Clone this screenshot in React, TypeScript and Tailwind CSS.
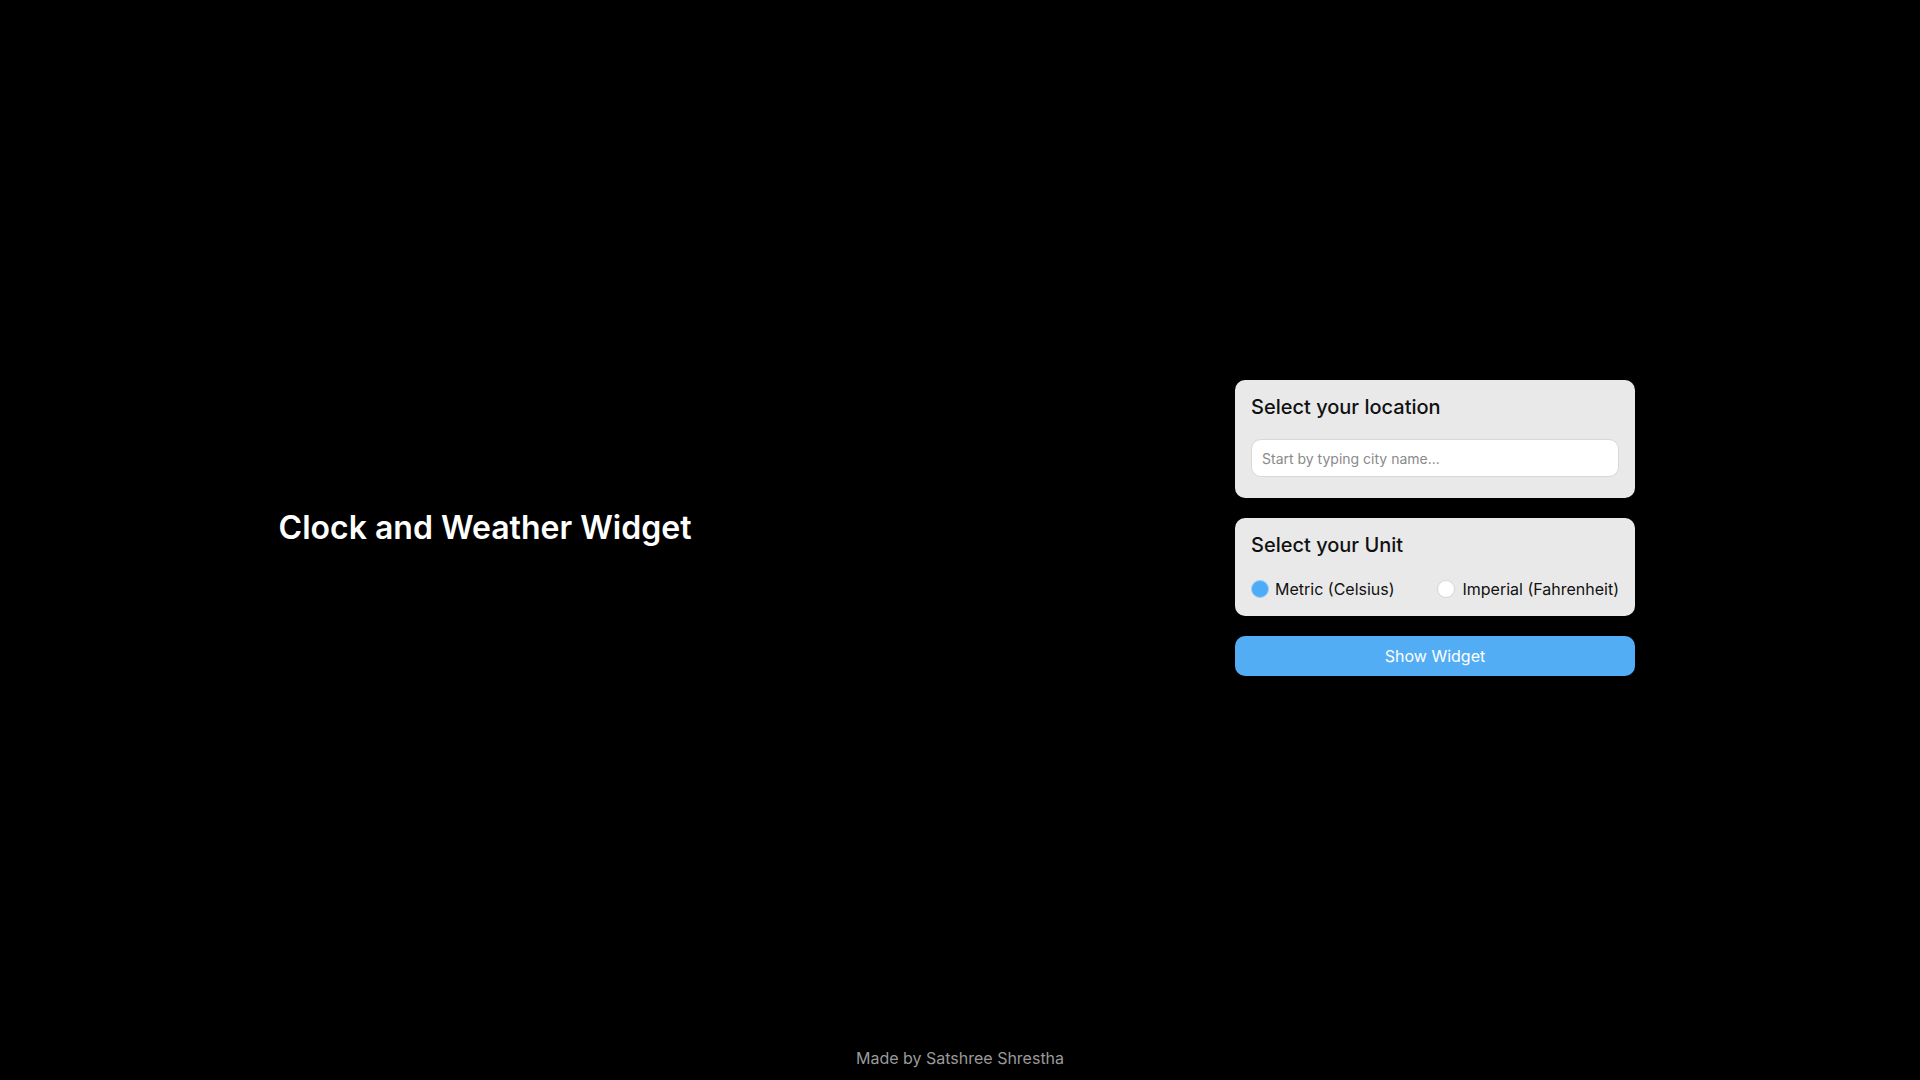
import React, { useState } from "react";

export default function App() {
  const [unit, setUnit] = useState<"metric" | "imperial">("metric");
  return (
    <div
      className="min-h-screen bg-black flex flex-col px-[10px]"
      style={{ fontFamily: "Inter, 'Noto Sans', sans-serif" }}
    >
      <main className="flex-1 grid grid-cols-2 items-center pt-[10px]">
        <div className="flex justify-center">
          <h1 className="text-[32px] leading-[38px] font-semibold text-white">
            Clock and Weather Widget
          </h1>
        </div>
        <div className="flex justify-center">
          <div className="w-[400px] flex flex-col gap-5">
            <div className="bg-[#e9e9e9] rounded-[10px] px-4 pt-[13px] pb-[21px]">
              <h2 className="text-[20px] leading-[28px] font-medium text-[#111]">
                Select your location
              </h2>
              <input
                type="text"
                placeholder="Start by typing city name..."
                className="mt-[18px] w-full h-[38px] bg-white border border-[#d8d8d8] rounded-[10px] px-[10px] text-[14px] text-[#222] placeholder:text-[#8a8a8a] outline-none"
              />
            </div>
            <div className="bg-[#e9e9e9] rounded-[10px] px-4 pt-[13px] pb-[15px]">
              <h2 className="text-[20px] leading-[28px] font-medium text-[#111]">
                Select your Unit
              </h2>
              <div className="mt-[18px] flex items-center justify-between h-6">
                <label
                  className="flex items-center gap-[6px] cursor-pointer text-[16px] text-[#111]"
                  onClick={() => setUnit("metric")}
                >
                  <span
                    className={
                      unit === "metric"
                        ? "w-[18px] h-[18px] rounded-full bg-[#4dabf7] border border-[#9ccdf5]"
                        : "w-[18px] h-[18px] rounded-full bg-white border border-[#d6d6d6]"
                    }
                  />
                  Metric (Celsius)
                </label>
                <label
                  className="flex items-center gap-[7px] cursor-pointer text-[16px] text-[#111]"
                  onClick={() => setUnit("imperial")}
                >
                  <span
                    className={
                      unit === "imperial"
                        ? "w-[18px] h-[18px] rounded-full bg-[#4dabf7] border border-[#9ccdf5]"
                        : "w-[18px] h-[18px] rounded-full bg-white border border-[#d6d6d6]"
                    }
                  />
                  Imperial (Fahrenheit)
                </label>
              </div>
            </div>
            <button className="h-10 w-full rounded-[10px] bg-[#52adf5] text-white text-[16px]">
              Show Widget
            </button>
          </div>
        </div>
      </main>
      <footer className="text-center text-[16px] leading-6 text-[#9a9a9a] pb-[10px]">
        Made by Satshree Shrestha
      </footer>
    </div>
  );
}
